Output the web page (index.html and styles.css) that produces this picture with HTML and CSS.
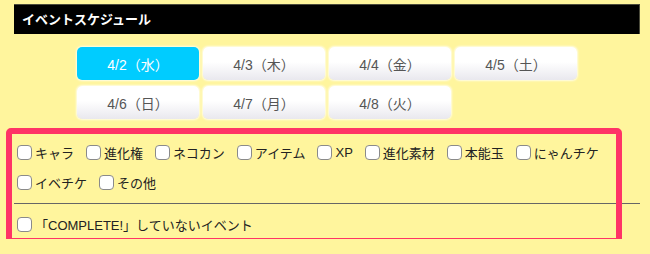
FILE: index.html
```html
<!DOCTYPE html>
<html lang="ja">
<head>
    <meta charset="UTF-8">
    <meta name="viewport" content="width=device-width, initial-scale=1.0">
    <title>イベントスケジュール</title>
    <link rel="stylesheet" href="styles.css">
</head>
<body>
    <div class="page">
        <!-- Heading -->
        <h2 class="heading">イベントスケジュール</h2>

        <!-- Date tabs -->
        <div class="dates">
            <button class="date-button active">4/2（水）</button>
            <button class="date-button">4/3（木）</button>
            <button class="date-button">4/4（金）</button>
            <button class="date-button">4/5（土）</button>
            <button class="date-button">4/6（日）</button>
            <button class="date-button">4/7（月）</button>
            <button class="date-button">4/8（火）</button>
        </div>

        <!-- Filters -->
        <div class="filters">
            <div class="filter-list">
                <label class="filter"><input type="checkbox">キャラ</label>
                <label class="filter"><input type="checkbox">進化権</label>
                <label class="filter"><input type="checkbox">ネコカン</label>
                <label class="filter"><input type="checkbox">アイテム</label>
                <label class="filter"><input type="checkbox">XP</label>
                <label class="filter"><input type="checkbox">進化素材</label>
                <label class="filter"><input type="checkbox">本能玉</label>
                <label class="filter"><input type="checkbox">にゃんチケ</label>
                <label class="filter"><input type="checkbox">イベチケ</label>
                <label class="filter"><input type="checkbox">その他</label>
            </div>
            <hr class="divider">
            <div class="filter-list">
                <label class="filter"><input type="checkbox">「COMPLETE!」していないイベント</label>
            </div>
            <div class="highlight"></div>
        </div>
    </div>
</body>
</html>
```

FILE: styles.css
```css
* {
    margin: 0;
    padding: 0;
    box-sizing: border-box;
}

body {
    background-color: #fff59d;
    color: #222;
    font-family: "Liberation Sans", "Noto Sans CJK JP", sans-serif;
    font-size: 13px;
}

.page {
    padding: 4px 10px 0 14px;
}

.heading {
    height: 30px;
    line-height: 29px;
    padding-left: 8px;
    background-color: #000;
    border-top: 1px solid #4a4a3a;
    border-right: 1px solid #4a4a3a;
    color: #fff;
    font-size: 13px;
    font-weight: bold;
}

.dates {
    display: grid;
    grid-template-columns: repeat(4, 122px);
    column-gap: 4px;
    row-gap: 6px;
    width: 500px;
    margin: 13px auto 0;
}

.date-button {
    height: 33px;
    border: none;
    border-radius: 5px;
    background: linear-gradient(#fff 45%, #e9e8ee);
    box-shadow: 0 0 2px 1px rgba(255, 255, 255, 0.75);
    color: #555;
    font-family: inherit;
    font-size: 14px;
    cursor: pointer;
}

.date-button.active {
    background: #00ccff;
    color: #fff;
}

.filters {
    position: relative;
    margin-top: 18px;
}

.filter-list {
    display: flex;
    flex-wrap: wrap;
}

.filter {
    display: inline-flex;
    align-items: center;
    height: 30px;
    margin-right: 9px;
    cursor: pointer;
}

.filter input {
    appearance: none;
    -webkit-appearance: none;
    width: 15px;
    height: 15px;
    margin: 0 3px;
    border: 1.5px solid #8a8a8a;
    border-radius: 4px;
    background-color: #fff;
}

.divider {
    height: 0;
    margin: 6px 0 5px;
    border: none;
    border-top: 1px solid #666;
}

.highlight {
    position: absolute;
    left: -8px;
    top: -9px;
    width: 616px;
    height: 116px;
    border: 6px solid #ff3366;
    border-radius: 5px;
    pointer-events: none;
}
```
